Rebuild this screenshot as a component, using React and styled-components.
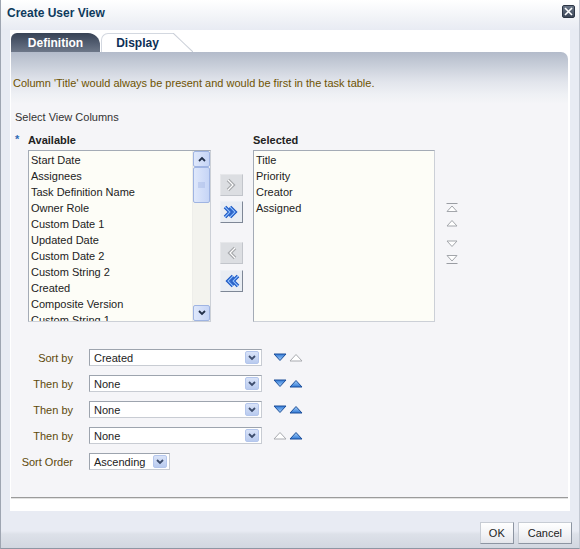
import React from 'react';
import styled, { createGlobalStyle } from 'styled-components';

const GlobalStyle = createGlobalStyle`
  html, body {
    margin: 0;
    padding: 0;
    background: #e8ebf3;
  }
  body {
    font-family: "Liberation Sans", Arial, sans-serif;
    font-size: 11px;
    color: #222;
  }
`;

const Dialog = styled.div`
  width: 580px;
  height: 549px;
  box-sizing: border-box;
  display: flex;
  flex-direction: column;
  background: #e8ebf3;
  border-left: 1px solid #9ea5b1;
  border-right: 1px solid #c3c8d2;
  border-bottom: 1px solid #8f96a3;
`;

const TitleBar = styled.div`
  height: 30px;
  flex: none;
  display: flex;
  justify-content: space-between;
  align-items: flex-start;
  padding: 6px 4px 0 6px;
  box-sizing: border-box;
  background: linear-gradient(#ffffff, #f1f3f7 60%, #e8ebf3);
`;

const Title = styled.div`
  font-weight: bold;
  font-size: 12px;
  line-height: 14px;
  color: #0e3a5c;
`;

const CloseButton = styled.div`
  width: 13px;
  height: 13px;
  margin-top: -1px;
  box-sizing: border-box;
  border: 1px solid #2c3544;
  border-radius: 2px;
  background: linear-gradient(#6a7688, #3c4657);
  display: flex;
  align-items: center;
  justify-content: center;
`;

const Body = styled.div`
  flex: 1;
  margin: 0 9px;
  background: #ffffff;
  padding: 3px 2px 13px 1px;
  display: flex;
  flex-direction: column;
`;

const TabRow = styled.div`
  display: flex;
  height: 19px;
  flex: none;
`;

const DarkTab = styled.div`
  width: 89px;
  height: 19px;
  border-radius: 6px 12px 0 0;
  background: linear-gradient(#374254, #566174 60%, #6d7788);
  color: #fff;
  font-weight: bold;
  font-size: 12px;
  line-height: 20px;
  text-align: center;
`;

const LightTab = styled.div`
  position: relative;
  width: 72px;
  height: 19px;
  box-sizing: border-box;
  margin-left: 1px;
  border-top: 1px solid #d3d8e0;
  border-left: 1px solid #d3d8e0;
  border-radius: 7px 0 0 0;
  background: #fff;
  color: #0d2f56;
  font-weight: bold;
  font-size: 12px;
  line-height: 19px;
  text-align: center;

  &::after {
    content: '';
    position: absolute;
    top: -1px;
    right: -20px;
    width: 20px;
    height: 19px;
    background: linear-gradient(to top right, #fff calc(50% - 1px), #c9ced7 50%, transparent calc(50% + 1px));
  }
`;

const Panel = styled.div`
  flex: 1;
  border-radius: 0 7px 0 0;
  border-bottom: 1px solid #9b9b9b;
  box-shadow: 0 1px 0 #e2e2e2;
  background: linear-gradient(#b3bbca 0, #c9cfda 14px, #e2e5ec 30px, #eef0f4 42px, #f5f5f8 52px);
  display: flex;
  flex-direction: column;
`;

const Message = styled.div`
  margin-top: 24px;
  padding-left: 2px;
  line-height: 14px;
  color: #6e5300;
`;

const SectionLabel = styled.div`
  margin-top: 20px;
  padding-left: 4px;
  line-height: 14px;
  color: #333;
`;

const ColumnsArea = styled.div`
  display: flex;
  align-items: flex-start;
  margin-top: 9px;
  padding-left: 4px;
`;

const Req = styled.span`
  width: 13px;
  flex: none;
  color: #2d6bb6;
  font-weight: bold;
  line-height: 12px;
`;

const ListColumn = styled.div`
  display: flex;
  flex-direction: column;
  gap: 3px;
  margin-left: ${(p) => p.$ml || 0}px;
`;

const ColHead = styled.div`
  font-weight: bold;
  font-size: 11px;
  line-height: 14px;
  color: #222;
`;

const ListBox = styled.div`
  width: ${(p) => p.$w}px;
  height: 172px;
  box-sizing: border-box;
  border: 1px solid;
  border-color: #a4abb6 #ccd0d7 #ccd0d7 #a4abb6;
  background: #fdfdf7;
  display: flex;
  overflow: hidden;
`;

const Items = styled.div`
  flex: 1;
  padding-top: 1px;
`;

const Item = styled.div`
  padding-left: 2px;
  line-height: 16px;
  white-space: nowrap;
  color: #222;
`;

const ScrollBar = styled.div`
  width: 17px;
  flex: none;
  display: flex;
  flex-direction: column;
  background: #f3f3ee;
  border-left: 1px solid #eeeeea;
`;

const ScrollPart = styled.div`
  height: ${(p) => p.$h}px;
  box-sizing: border-box;
  border: 1px solid #9fb4e2;
  border-radius: 2px;
  background: linear-gradient(to right, #dfe8fb, #c6d5f6);
  display: flex;
  align-items: center;
  justify-content: center;
  margin-top: ${(p) => p.$mt || 0}px;
`;

const ShuttleColumn = styled.div`
  display: flex;
  flex-direction: column;
  margin-left: 9px;
  padding-top: 41px;
`;

const ShuttleButton = styled.div`
  width: 23px;
  height: 22px;
  box-sizing: border-box;
  margin-top: ${(p) => p.$mt || 0}px;
  border: 1px solid;
  border-color: ${(p) => (p.$on ? '#eef1f6 #7e8796 #7e8796 #eef1f6' : '#e6e7ea #c2c5cb #c2c5cb #e6e7ea')};
  background: ${(p) => (p.$on ? '#e9edf3' : '#dcdee2')};
  display: flex;
  align-items: center;
  justify-content: center;
`;

const ReorderColumn = styled.div`
  display: flex;
  flex-direction: column;
  align-items: center;
  margin-left: 11px;
  padding-top: 70px;
`;

const ReorderIcon = styled.svg`
  display: block;
  margin-top: ${(p) => p.$mt || 0}px;
`;

const SortForm = styled.div`
  display: flex;
  flex-direction: column;
  gap: 9px;
  margin-top: 27px;
`;

const SortRow = styled.div`
  display: flex;
  align-items: center;
  height: 17px;
`;

const SortLabel = styled.div`
  width: 62px;
  text-align: right;
  margin-right: 16px;
  color: #5e4a0c;
  white-space: nowrap;
`;

const Select = styled.div`
  width: ${(p) => p.$w}px;
  height: 17px;
  box-sizing: border-box;
  border: 1px solid;
  border-color: #9da4ae #c8ccd3 #c8ccd3 #9da4ae;
  background: #fff;
  display: flex;
  align-items: center;
  justify-content: space-between;
  padding: 0 2px 0 4px;
  color: #222;
`;

const DropButton = styled.div`
  width: 14px;
  height: 13px;
  border-radius: 2px;
  background: linear-gradient(#d9e3f8, #b9cbef);
  border: 1px solid #b4c6ec;
  box-sizing: border-box;
  display: flex;
  align-items: center;
  justify-content: center;
`;

const SortArrows = styled.div`
  display: flex;
  gap: 2px;
  margin-left: 11px;
`;

const Footer = styled.div`
  height: 37px;
  flex: none;
  box-sizing: border-box;
  display: flex;
  justify-content: flex-end;
  align-items: flex-start;
  gap: 4px;
  padding: 11px 7px 0 0;
  background: linear-gradient(#e8ebf3 0, #e8ebf3 20px, #dde1e9 23px, #d2d7e0 100%);
`;

const Button = styled.div`
  height: 22px;
  box-sizing: border-box;
  padding: 0 ${(p) => p.$px}px;
  border: 1px solid;
  border-color: #c7ccd4 #8d95a2 #8d95a2 #c7ccd4;
  background: linear-gradient(#ffffff, #f1f2f5 60%, #e4e6eb);
  line-height: 20px;
  color: #222;
`;

const Chevron = ({ dir = 'right', double, on }) => {
  const flip = dir === 'left' ? 'translate(23 0) scale(-1 1)' : undefined;
  const paths = double ? ['M5 6 L10 11 L5 16', 'M10 6 L15 11 L10 16'] : ['M8 6 L13 11 L8 16'];
  const outer = on ? '#1c58c4' : '#a7a9ad';
  const inner = on ? '#8fc0ff' : '#ffffff';
  return (
    <svg width="21" height="20" viewBox="1 1 21 20">
      <g transform={flip}>
        {paths.map((d) => (
          <path key={d + 'o'} d={d} fill="none" stroke={outer} strokeWidth="3.6" strokeLinejoin="miter" />
        ))}
        {paths.map((d) => (
          <path key={d + 'i'} d={d} fill="none" stroke={inner} strokeWidth="1.1" />
        ))}
      </g>
    </svg>
  );
};

// sort direction arrow; disabled ones are drawn as a grey outlined up-triangle
const Tri = ({ down, on }) => {
  const pointsDown = !!down && on;
  return (
    <svg width="14" height="9" viewBox="0 0 14 9">
      <defs>
        <linearGradient id={pointsDown ? 'gd' : 'gu'} x1="0" y1="0" x2="0" y2="1">
          <stop offset="0" stopColor={pointsDown ? '#2f78d6' : '#a8d2fa'} />
          <stop offset="1" stopColor={pointsDown ? '#a8d2fa' : '#2f78d6'} />
        </linearGradient>
      </defs>
      <polygon
        points={pointsDown ? '1,1 13,1 7,7.5' : '1,8 13,8 7,1.5'}
        fill={on ? `url(#${pointsDown ? 'gd' : 'gu'})` : '#fff'}
        stroke={on ? '#1d4f99' : '#a9abb0'}
        strokeWidth="1"
      />
    </svg>
  );
};

const DropChevron = () => (
  <svg width="8" height="6" viewBox="0 0 8 6">
    <path d="M1 1 L4 4 L7 1" fill="none" stroke="#3d4d6d" strokeWidth="1.8" />
  </svg>
);

const SortSelect = ({ label, value, width = 173, arrows }) => (
  <SortRow>
    <SortLabel>{label}</SortLabel>
    <Select $w={width}>
      <span>{value}</span>
      <DropButton>
        <DropChevron />
      </DropButton>
    </Select>
    {arrows && (
      <SortArrows>
        <Tri down on={arrows[0]} />
        <Tri on={arrows[1]} />
      </SortArrows>
    )}
  </SortRow>
);

const available = [
  'Start Date',
  'Assignees',
  'Task Definition Name',
  'Owner Role',
  'Custom Date 1',
  'Updated Date',
  'Custom Date 2',
  'Custom String 2',
  'Created',
  'Composite Version',
  'Custom String 1',
];

const selected = ['Title', 'Priority', 'Creator', 'Assigned'];

export default function App() {
  return (
    <>
      <GlobalStyle />
      <Dialog>
        <TitleBar>
          <Title>Create User View</Title>
          <CloseButton>
            <svg width="9" height="9" viewBox="0 0 9 9">
              <path d="M1 1 L8 8 M8 1 L1 8" stroke="#fff" strokeWidth="1.6" />
            </svg>
          </CloseButton>
        </TitleBar>
        <Body>
          <TabRow>
            <DarkTab>Definition</DarkTab>
            <LightTab>Display</LightTab>
          </TabRow>
          <Panel>
            <Message>Column 'Title' would always be present and would be first in the task table.</Message>
            <SectionLabel>Select View Columns</SectionLabel>
            <ColumnsArea>
              <Req>*</Req>
              <ListColumn>
                <ColHead>Available</ColHead>
                <ListBox $w={183}>
                  <Items>
                    {available.map((t) => (
                      <Item key={t}>{t}</Item>
                    ))}
                  </Items>
                  <ScrollBar>
                    <ScrollPart $h={16}>
                      <svg width="8" height="6" viewBox="0 0 8 6">
                        <path d="M1 5 L4 2 L7 5" fill="none" stroke="#22304a" strokeWidth="1.8" />
                      </svg>
                    </ScrollPart>
                    <ScrollPart $h={36}>
                      <svg width="7" height="6" viewBox="0 0 7 6">
                        <path d="M0 1 H7 M0 3 H7 M0 5 H7" stroke="#a9bbe6" strokeWidth="1" />
                      </svg>
                    </ScrollPart>
                    <ScrollPart $h={16} $mt={102}>
                      <svg width="8" height="6" viewBox="0 0 8 6">
                        <path d="M1 1 L4 4 L7 1" fill="none" stroke="#22304a" strokeWidth="1.8" />
                      </svg>
                    </ScrollPart>
                  </ScrollBar>
                </ListBox>
              </ListColumn>
              <ShuttleColumn>
                <ShuttleButton>
                  <Chevron />
                </ShuttleButton>
                <ShuttleButton $on $mt={5}>
                  <Chevron double on />
                </ShuttleButton>
                <ShuttleButton $mt={19}>
                  <Chevron dir="left" />
                </ShuttleButton>
                <ShuttleButton $on $mt={6}>
                  <Chevron dir="left" double on />
                </ShuttleButton>
              </ShuttleColumn>
              <ListColumn $ml={10}>
                <ColHead>Selected</ColHead>
                <ListBox $w={182}>
                  <Items>
                    {selected.map((t) => (
                      <Item key={t}>{t}</Item>
                    ))}
                  </Items>
                </ListBox>
              </ListColumn>
              <ReorderColumn>
                <ReorderIcon width="12" height="10" viewBox="0 0 12 10">
                  <path d="M0.5 0.5 H11.5" stroke="#9a9da3" />
                  <polygon points="1,8.5 11,8.5 6,3" fill="#fff" stroke="#a3a6ab" />
                </ReorderIcon>
                <ReorderIcon width="12" height="8" viewBox="0 0 12 8" $mt={6}>
                  <polygon points="1,7 11,7 6,1.5" fill="#fff" stroke="#a3a6ab" />
                </ReorderIcon>
                <ReorderIcon width="12" height="8" viewBox="0 0 12 8" $mt={13}>
                  <polygon points="1,1 11,1 6,6.5" fill="#fff" stroke="#a3a6ab" />
                </ReorderIcon>
                <ReorderIcon width="12" height="10" viewBox="0 0 12 10" $mt={6}>
                  <polygon points="1,1.5 11,1.5 6,7" fill="#fff" stroke="#a3a6ab" />
                  <path d="M0.5 9.5 H11.5" stroke="#9a9da3" />
                </ReorderIcon>
              </ReorderColumn>
            </ColumnsArea>
            <SortForm>
              <SortSelect label="Sort by" value="Created" arrows={[true, false]} />
              <SortSelect label="Then by" value="None" arrows={[true, true]} />
              <SortSelect label="Then by" value="None" arrows={[true, true]} />
              <SortSelect label="Then by" value="None" arrows={[false, true]} />
              <SortSelect label="Sort Order" value="Ascending" width={81} />
            </SortForm>
          </Panel>
        </Body>
        <Footer>
          <Button $px={8}>OK</Button>
          <Button $px={9}>Cancel</Button>
        </Footer>
      </Dialog>
    </>
  );
}
